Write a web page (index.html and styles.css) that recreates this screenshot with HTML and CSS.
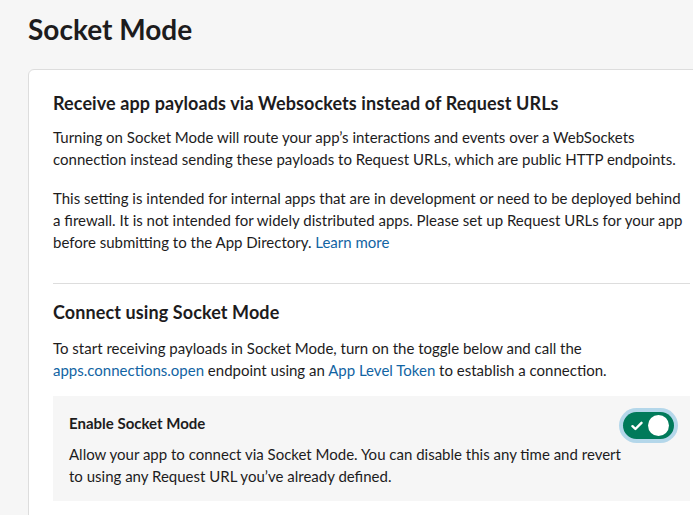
FILE: index.html
```html
<!DOCTYPE html>
<html>
<head>
<meta charset="utf-8">
<link rel="stylesheet" href="styles.css">
</head>
<body>
<div class="page">
  <h1 class="title">Socket Mode</h1>
  <div class="card">
    <section class="section first">
      <h2 class="heading">Receive app payloads via Websockets instead of Request URLs</h2>
      <p class="para p1">Turning on Socket Mode will route your app’s interactions and events over a WebSockets connection instead sending these payloads to Request URLs, which are public HTTP endpoints.</p>
      <p class="para p2">This setting is intended for internal apps that are in development or need to be deployed behind a firewall. It is not intended for widely distributed apps. Please set up Request URLs for your app before submitting to the App Directory. <a class="link" href="#">Learn more</a></p>
    </section>
    <hr class="divider">
    <section class="section second">
      <h2 class="heading">Connect using Socket Mode</h2>
      <p class="para p3">To start receiving payloads in Socket Mode, turn on the toggle below and call the <a class="link" href="#">apps.connections.open</a> endpoint using an <a class="link" href="#">App Level Token</a> to establish a connection.</p>
      <div class="setting">
        <div class="setting-text">
          <div class="setting-label">Enable Socket Mode</div>
          <p class="setting-desc">Allow your app to connect via Socket Mode. You can disable this any time and revert to using any Request URL you’ve already defined.</p>
        </div>
        <div class="toggle">
          <svg class="check" width="12" height="10" viewBox="0 0 12 10"><path d="M1.5 5.2 L4.4 8 L10.5 1.8" fill="none" stroke="#fff" stroke-width="2.4" stroke-linecap="round" stroke-linejoin="round"/></svg>
          <span class="knob"></span>
        </div>
      </div>
    </section>
  </div>
</div>
</body>
</html>
```
FILE: styles.css
```css
html, body {
  margin: 0;
  padding: 0;
  background: #f6f6f6;
  overflow: hidden;
}
body {
  font-family: Lato, "Noto Sans", sans-serif;
  color: #1d1c1d;
  height: 515px;
}
.page {
  padding: 12px 0 0 28px;
  width: 760px;
}
.title {
  margin: 0 0 23px 0;
  font-size: 28px;
  line-height: 34px;
  font-weight: 700;
}
.card {
  width: 637px;
  background: #fff;
  border: 1px solid #dddddd;
  border-radius: 6px;
  padding: 0 24px 20px 24px;
}
.section.first {
  padding-top: 21px;
}
.heading {
  margin: 0;
  font-size: 18px;
  line-height: 24px;
  font-weight: 700;
  letter-spacing: 0.1px;
}
.para {
  margin: 0;
  font-size: 15px;
  line-height: 22px;
}
.p1 { margin-top: 11px; }
.p2 { margin-top: 17px; }
.divider {
  border: 0;
  border-top: 1px solid #dddddd;
  margin: 30px 0 16px 0;
}
.p3 { margin-top: 13px; }
.link {
  color: #1264a3;
  text-decoration: none;
}
.setting {
  margin-top: 15px;
  background: #f6f6f6;
  display: flex;
  align-items: flex-start;
  padding: 16px 16px 14px 16px;
}
.setting-text {
  flex: 1 1 auto;
  min-width: 0;
}
.setting-label {
  font-size: 15px;
  line-height: 22px;
  font-weight: 700;
}
.setting-desc {
  margin: 9px 0 0 0;
  font-size: 15px;
  line-height: 22px;
}
.toggle {
  position: relative;
  width: 51px;
  height: 27px;
  border-radius: 14px;
  background: #007a5a;
  box-shadow: 0 0 0 4px #b4d7ea;
  flex: 0 0 auto;
}
.check {
  position: absolute;
  left: 8px;
  top: 9px;
}
.knob {
  position: absolute;
  right: 5px;
  top: 3px;
  width: 21px;
  height: 21px;
  border-radius: 50%;
  background: #fff;
}
```
